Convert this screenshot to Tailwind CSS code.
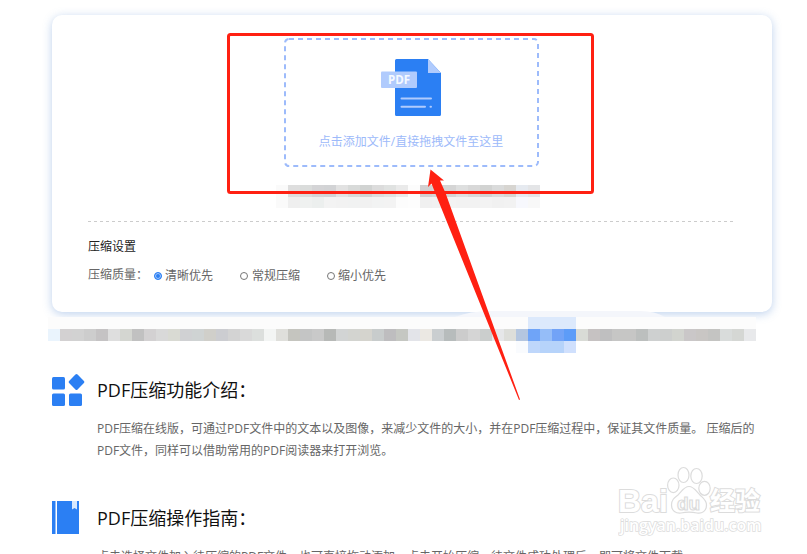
<!DOCTYPE html>
<html lang="zh-CN">

<head>
  <meta charset="UTF-8">
  <meta name="viewport" content="width=device-width, initial-scale=1.0">
  <title>PDF压缩</title>
  <script src="https://cdn.jsdelivr.net/npm/@tailwindcss/browser@4"></script>
</head>

<body class="relative h-screen overflow-hidden bg-white font-['Open_Sans','Noto_Sans_CJK_SC',sans-serif] text-xs text-[#666]">
  <main class="pl-[52px] pr-[35px] pt-[15px]">

    <!-- 上传与设置 -->
    <form class="rounded-[10px] px-9 pt-[23px] pb-[26px] bg-white shadow-[0_2px_10px_rgba(90,140,210,0.4)]">
      <div class="pr-0.5">
        <button type="button" class="relative mx-auto flex h-[129px] w-[255px] flex-col items-center pt-[21px] text-[#9dbafa]">
          <svg class="absolute inset-0" width="255" height="129" fill="none">
            <rect x="1" y="1" width="253" height="127" rx="4" stroke="#9dbbfb" stroke-width="2" stroke-dasharray="5 4" />
          </svg>
          <svg width="60" height="57" viewBox="0 0 60 57">
            <path d="M15 0H47L60 14V55.500Q60 57 58.500 57H15.500Q14 57 14 55.500V1.500Q14 0 15.500 0Z" fill="#2b7ff3" />
            <path d="M47 0L60 14H47Z" fill="#b0cbfd" />
            <rect y="12.500" width="36" height="16.500" rx="1" fill="#b0cbfd" />
            <text x="18" y="25" text-anchor="middle" font-size="11.500" font-weight="700" fill="#f5f9ff">PDF</text>
            <path d="M20.500 39.500H50M20.500 47.700H44M49.500 47.700H50" stroke="#b0cbfd" stroke-width="2" stroke-linecap="round" />
          </svg>
          <span class="mt-[17px] leading-[18px]">点击添加文件/直接拖拽文件至这里</span>
        </button>

        <!-- 马赛克 -->
        <svg class="mx-auto mt-[18px] block" width="271" height="23" shape-rendering="crispEdges">
          <g id="mosaicTop"></g>
        </svg>
      </div>

      <svg class="mt-[13px] block w-full" height="1">
        <path d="M0 .5H2000" stroke="#ccc" stroke-dasharray="3 3" />
      </svg>

      <h2 class="mt-4 leading-[18px] text-[#222]">压缩设置</h2>
      <fieldset class="mt-2 flex items-start leading-[20px]">
        <legend class="float-left w-[66px] leading-[22px]">压缩质量：</legend>
        <div class="flex gap-[27px] pt-[2px]">
          <label class="flex items-center gap-[3px]"><input type="radio" name="quality" checked class="size-2 appearance-none rounded-full border border-[#2b7ff3] bg-[#2b7ff3] shadow-[inset_0_0_0_1px_#a9cbfb]">清晰优先</label>
          <label class="flex items-center gap-[4px]"><input type="radio" name="quality" class="size-2 appearance-none rounded-full border border-[#767676] bg-white">常规压缩</label>
          <label class="flex items-center gap-[3px]"><input type="radio" name="quality" class="size-2 appearance-none rounded-full border border-[#767676] bg-white">缩小优先</label>
        </div>
      </fieldset>
    </form>

    <div class="mt-[5px] -ml-1">
      <svg class="block" width="708" height="36" shape-rendering="crispEdges">
        <rect width="708" height="12" fill="#fcfcfc" />
        <g id="mosaicBar"></g>
      </svg>
    </div>

    <!-- 功能介绍 -->
    <section class="mt-5 flex gap-3">
      <svg class="shrink-0" width="33" height="33" viewBox="0 0 33 33" fill="#2b7ff3">
        <rect y="4" width="13" height="12.500" rx="1.500" />
        <rect y="20.500" width="13" height="12.500" rx="1.500" />
        <rect x="17" y="20.500" width="13" height="12.500" rx="1.500" />
        <rect x="18.500" y="3" width="12" height="12" rx="1.500" transform="rotate(45 24.500 9)" />
      </svg>
      <div class="pt-[3px]">
        <h2 class="text-lg leading-[28px] text-[#111]">PDF压缩功能介绍：</h2>
        <p class="mt-[14px] max-w-[662px] leading-[22px]">PDF压缩在线版，可通过PDF文件中的文本以及图像，来减少文件的大小，并在PDF压缩过程中，保证其文件质量。 压缩后的PDF文件，同样可以借助常用的PDF阅读器来打开浏览。</p>
      </div>
    </section>

    <!-- 操作指南 -->
    <section class="mt-[39px] flex gap-[18px]">
      <svg class="shrink-0" width="27" height="33" viewBox="0 0 27 33">
        <path d="M0 0H3.500V33H0Z M5 0H27V33H5Z" fill="#2b7ff3" />
        <path d="M20 0H25V8.500L22.500 7L20 8.500Z" fill="#d8e8fe" />
      </svg>
      <div class="pt-[3px]">
        <h2 class="text-lg leading-[28px] text-[#111]">PDF压缩操作指南：</h2>
        <p class="mt-[14px] leading-[22px]">点击选择文件加入待压缩的PDF文件，也可直接拖动添加，点击开始压缩，待文件成功处理后，即可将文件下载。</p>
      </div>
    </section>
  </main>

  <!-- 标注 -->
  <svg class="pointer-events-none absolute left-0 top-0" width="807" height="554" viewBox="0 0 807 554">
    <path d="M455 317Q470 311 490 311H640Q655 311 665 317Z" fill="#f4f6fb" />
    <rect x="528" y="317" width="48" height="12" fill="#dce9fc" />
    <rect x="228.500" y="34.500" width="364" height="158" rx="2" fill="none" stroke="#ff2012" stroke-width="3" />
    <path d="M430.500 169.500L444 180.500L440 180.500L445.500 193L520 399.500L519 400L436 195L431.500 183.500L428 187Z" fill="#ff2012" />
  </svg>

  <!-- 水印 -->
  <svg class="pointer-events-none absolute right-[43px] bottom-[14px]" width="146" height="76" viewBox="618 464 146 76" fill="#fff" stroke="#dcdcdc" stroke-width="1.200">
    <g font-family="Liberation Sans, Noto Sans CJK SC, sans-serif" font-weight="700">
      <text x="618" y="512" font-size="32" stroke-width="2" paint-order="stroke">Bai</text>
      <text x="710" y="510" font-size="25" stroke-width="2" paint-order="stroke">经验</text>
    </g>
    <ellipse cx="673.300" cy="485.300" rx="5.700" ry="7.300" />
    <ellipse cx="683.500" cy="475" rx="5.500" ry="7.500" />
    <ellipse cx="696.500" cy="476" rx="5.700" ry="7.500" />
    <ellipse cx="704.500" cy="488.300" rx="5.700" ry="7" />
    <path d="M689 486.500C684 486.500 682 491 678 495C674 498 671.500 500 671.500 505C671.500 511 676 513.500 681 513C686 512 692 512 697 513C702 514 706.500 511 706.500 505C706.500 500 703 498 700 495C696 491 694 486.500 689 486.500Z" />
    <text x="677" y="510" font-family="Liberation Sans, sans-serif" font-size="19" font-weight="700">du</text>
    <text x="620" y="531" font-family="Open Sans, sans-serif" font-size="16" font-weight="600" stroke-width="1.500" paint-order="stroke">jingyan.baidu.com</text>
  </svg>

  <script>
    const top1 = 'fafafa dedede dadcdb d4d4d6 d2d3d5 e2e2e2 d8dad9 d1d3d2 dcdcdc e0e2e1 eaeaea fcfcfc d2d0d1 d5d5d5 d5d5d5 dedfdf d8d8d8 d2d3d2 dadbdb d7d5d1 e6eaf0 e4e5e7'.split(' ');
    const top2 = 'fafafa efefef eff1f0 ecefee f3f3f3 f2f2f2 f1f2f2 f1f1f1 f2f3f3 f3f3f3 fcfcfc fdfdfd f0f0f0 f1f1f1 f3f3f3 f2f2f2 f2f2f2 f3f3f3 f1f1f1 f2f2f2 f7f8fd f8f8f8'.split(' ');
    const bar = ('eaf4fd d3d1d2 d2d2d2 cdcdcd c5c3c4 dedede d4d6d1 c1c1c1 d3d1d2 d9d9d9 d9dad3 d0d1d3 cfd3d3 d0cfca cccdd1 d3d3d3 d9d9d9 dcdfdd f3f5f4 dfdfdb ' +
      'c5c5bf c4c5c5 c9c9c9 b7b9b7 d2d4d4 d3d4d0 d5d4ce c8cccc bebdbf c5c7c2 e3e4e9 ebe8e3 caced0 b7bcbc cccccc d5d5d5 cbcecd e6e7e9 dddeda b4c6e0 ' +
      '6fa4f8 95bdf8 72a3f7 5d9cf8 d9dbd6 c6c2c2 bfbfc0 c6c6c5 c6c6c5 bcbfbe ced0d0 cdcfce d2d4cf cac7c8 c9c6c4 c4c4c2 d9dcdb d5d7d4 e8e9eb').split(' ');
    const low = ['f9fbfe', 'bfd7fb', 'b6d3fa', 'b6d3fa', 'd0e0fd'];

    function drawRow(id, colors, x, y) {
      const g = document.getElementById(id);
      colors.forEach((color, i) => {
        const r = document.createElementNS('http://www.w3.org/2000/svg', 'rect');
        r.setAttribute('x', x + i * 12);
        r.setAttribute('y', y);
        r.setAttribute('width', 12);
        r.setAttribute('height', 12);
        r.setAttribute('fill', '#' + color);
        g.appendChild(r);
      });
    }

    drawRow('mosaicTop', top1, 0, 0);
    drawRow('mosaicTop', top2, 0, 12);
    drawRow('mosaicBar', bar, 0, 12);
    drawRow('mosaicBar', low, 468, 24);
  </script>
</body>

</html>
